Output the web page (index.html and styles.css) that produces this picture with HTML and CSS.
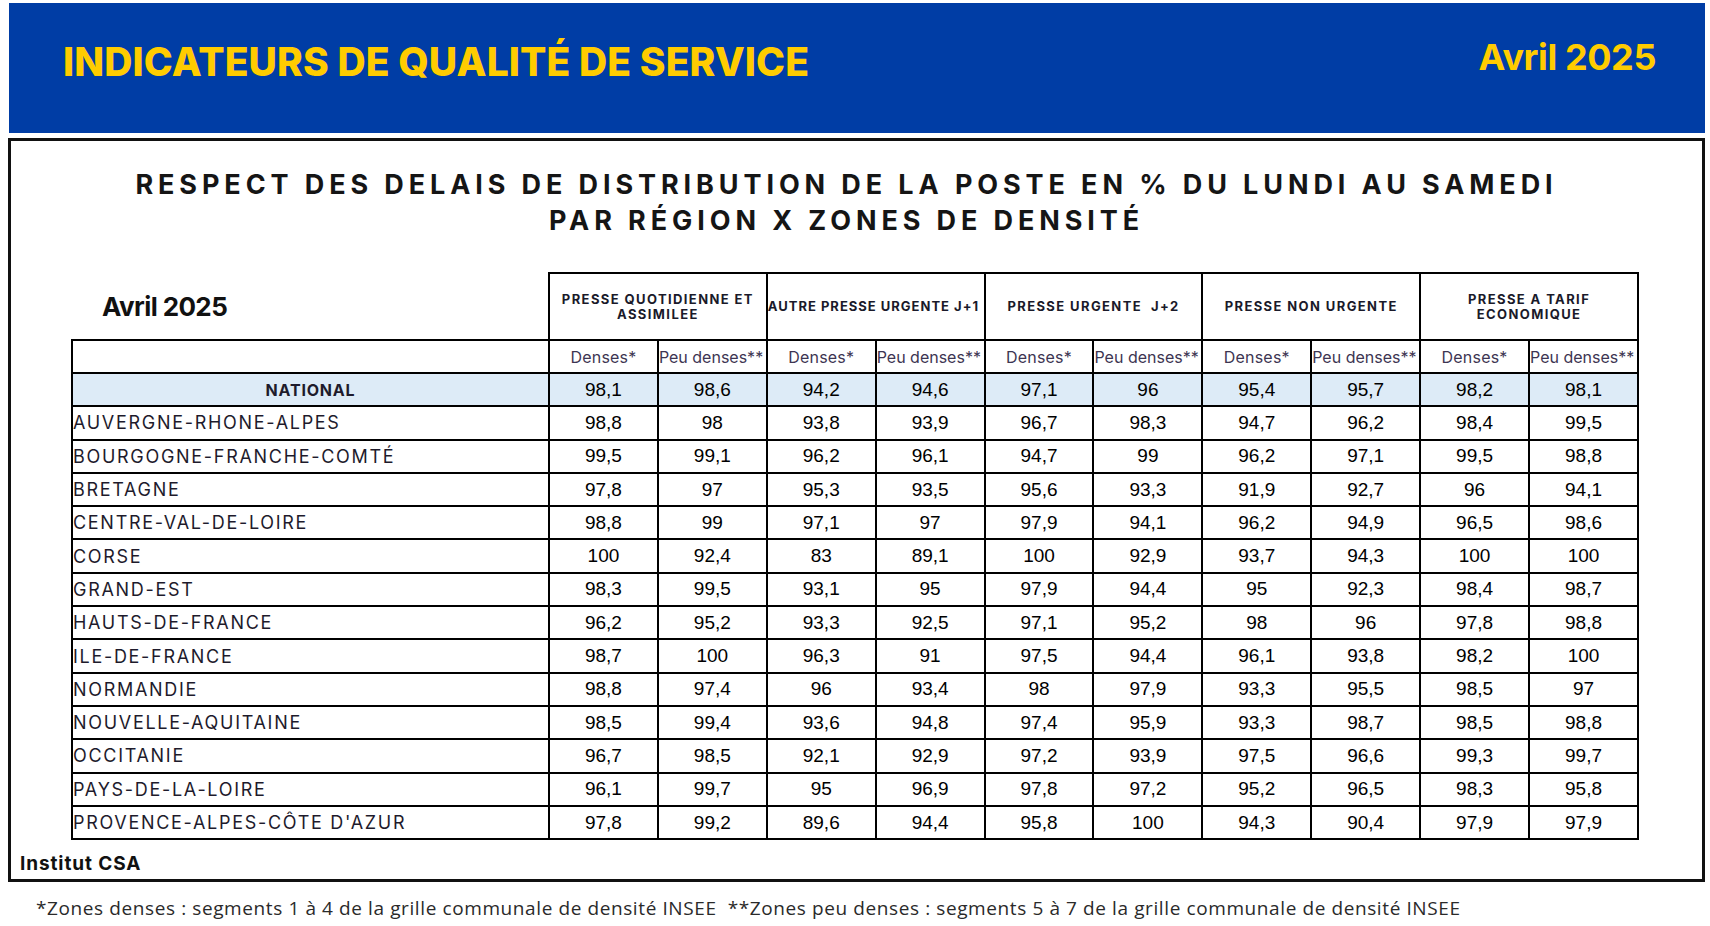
FILE: index.html
```html
<!DOCTYPE html>
<html lang="fr">
<head>
<meta charset="utf-8">
<title>Indicateurs de qualité de service</title>
<link rel="stylesheet" href="styles.css">
</head>
<body>
<header class="banner">
  <h1 class="banner-title">INDICATEURS DE QUALITÉ DE SERVICE</h1>
  <div class="banner-date">Avril 2025</div>
</header>
<section class="frame">
  <h2 class="subtitle">RESPECT DES DELAIS DE DISTRIBUTION DE LA POSTE EN % DU LUNDI AU SAMEDI<br>PAR RÉGION X ZONES DE DENSITÉ</h2>
  <table class="grid">
    <colgroup>
      <col class="c-region">
      <col><col><col><col><col><col><col><col><col><col>
    </colgroup>
    <thead>
      <tr class="r-group">
        <th class="corner">Avril 2025</th>
        <th colspan="2">PRESSE QUOTIDIENNE ET<br>ASSIMILEE</th>
        <th colspan="2" class="clip tight">AUTRE PRESSE URGENTE J+1</th>
        <th colspan="2">PRESSE URGENTE&nbsp; J+2</th>
        <th colspan="2">PRESSE NON URGENTE</th>
        <th colspan="2">PRESSE A TARIF<br>ECONOMIQUE</th>
      </tr>
      <tr class="r-sub">
        <th></th>
        <th>Denses*</th><th class="clip">Peu denses**</th>
        <th>Denses*</th><th class="clip">Peu denses**</th>
        <th>Denses*</th><th class="clip">Peu denses**</th>
        <th>Denses*</th><th class="clip">Peu denses**</th>
        <th>Denses*</th><th class="clip">Peu denses**</th>
      </tr>
    </thead>
    <tbody>
      <tr class="national"><th>NATIONAL</th><td>98,1</td><td>98,6</td><td>94,2</td><td>94,6</td><td>97,1</td><td>96</td><td>95,4</td><td>95,7</td><td>98,2</td><td>98,1</td></tr>
      <tr><th>AUVERGNE-RHONE-ALPES</th><td>98,8</td><td>98</td><td>93,8</td><td>93,9</td><td>96,7</td><td>98,3</td><td>94,7</td><td>96,2</td><td>98,4</td><td>99,5</td></tr>
      <tr><th>BOURGOGNE-FRANCHE-COMTÉ</th><td>99,5</td><td>99,1</td><td>96,2</td><td>96,1</td><td>94,7</td><td>99</td><td>96,2</td><td>97,1</td><td>99,5</td><td>98,8</td></tr>
      <tr><th>BRETAGNE</th><td>97,8</td><td>97</td><td>95,3</td><td>93,5</td><td>95,6</td><td>93,3</td><td>91,9</td><td>92,7</td><td>96</td><td>94,1</td></tr>
      <tr><th>CENTRE-VAL-DE-LOIRE</th><td>98,8</td><td>99</td><td>97,1</td><td>97</td><td>97,9</td><td>94,1</td><td>96,2</td><td>94,9</td><td>96,5</td><td>98,6</td></tr>
      <tr><th>CORSE</th><td>100</td><td>92,4</td><td>83</td><td>89,1</td><td>100</td><td>92,9</td><td>93,7</td><td>94,3</td><td>100</td><td>100</td></tr>
      <tr><th>GRAND-EST</th><td>98,3</td><td>99,5</td><td>93,1</td><td>95</td><td>97,9</td><td>94,4</td><td>95</td><td>92,3</td><td>98,4</td><td>98,7</td></tr>
      <tr><th>HAUTS-DE-FRANCE</th><td>96,2</td><td>95,2</td><td>93,3</td><td>92,5</td><td>97,1</td><td>95,2</td><td>98</td><td>96</td><td>97,8</td><td>98,8</td></tr>
      <tr><th>ILE-DE-FRANCE</th><td>98,7</td><td>100</td><td>96,3</td><td>91</td><td>97,5</td><td>94,4</td><td>96,1</td><td>93,8</td><td>98,2</td><td>100</td></tr>
      <tr><th>NORMANDIE</th><td>98,8</td><td>97,4</td><td>96</td><td>93,4</td><td>98</td><td>97,9</td><td>93,3</td><td>95,5</td><td>98,5</td><td>97</td></tr>
      <tr><th>NOUVELLE-AQUITAINE</th><td>98,5</td><td>99,4</td><td>93,6</td><td>94,8</td><td>97,4</td><td>95,9</td><td>93,3</td><td>98,7</td><td>98,5</td><td>98,8</td></tr>
      <tr><th>OCCITANIE</th><td>96,7</td><td>98,5</td><td>92,1</td><td>92,9</td><td>97,2</td><td>93,9</td><td>97,5</td><td>96,6</td><td>99,3</td><td>99,7</td></tr>
      <tr><th>PAYS-DE-LA-LOIRE</th><td>96,1</td><td>99,7</td><td>95</td><td>96,9</td><td>97,8</td><td>97,2</td><td>95,2</td><td>96,5</td><td>98,3</td><td>95,8</td></tr>
      <tr><th>PROVENCE-ALPES-CÔTE D'AZUR</th><td>97,8</td><td>99,2</td><td>89,6</td><td>94,4</td><td>95,8</td><td>100</td><td>94,3</td><td>90,4</td><td>97,9</td><td>97,9</td></tr>
    </tbody>
  </table>
  <div class="source">Institut CSA</div>
</section>
<p class="footnote">*Zones denses : segments 1 à 4 de la grille communale de densité INSEE&nbsp; **Zones peu denses : segments 5 à 7 de la grille communale de densité INSEE</p>
</body>
</html>
```
FILE: styles.css
```css
html, body {
  margin: 0;
  padding: 0;
  background: #ffffff;
}

body {
  font-family: "Inter", "Noto Sans", sans-serif;
  color: #111;
}

.banner {
  margin: 3px 5px 0 9px;
  height: 130px;
  background: #003da5;
  display: flex;
  justify-content: space-between;
  align-items: flex-start;
  padding: 0 49px 0 54px;
  box-sizing: border-box;
}

.banner-title {
  margin: 39px 0 0 0;
  font-family: "Inter", sans-serif;
  font-weight: 800;
  font-size: 39px;
  line-height: 40px;
  letter-spacing: 0.1px;
  color: #ffcc00;
}

.banner-date {
  margin-top: 34px;
  font-family: "Inter", sans-serif;
  font-weight: 700;
  font-size: 36px;
  line-height: 40px;
  letter-spacing: -0.4px;
  color: #ffcc00;
}

.frame {
  margin: 5px 5px 0 8px;
  height: 744px;
  border: 3px solid #111;
  box-sizing: border-box;
  padding: 26px 0 0 0;
}

.subtitle {
  margin: 0;
  padding-right: 20px;
  text-align: center;
  font-family: "Inter", sans-serif;
  font-weight: 700;
  font-size: 27px;
  line-height: 36px;
  letter-spacing: 4.9px;
  color: #151515;
}

.grid {
  margin: 33px 0 0 60px;
  width: 1568px;
  table-layout: fixed;
  border-collapse: collapse;
}

.c-region {
  width: 477px;
}

.grid th,
.grid td {
  border: 2px solid #000;
  padding: 0;
}

.r-group {
  height: 67px;
}

.r-group th {
  font-family: "Inter", sans-serif;
  font-weight: 700;
  font-size: 13px;
  line-height: 15px;
  letter-spacing: 1.4px;
  color: #1a1a2a;
  text-align: center;
}

.grid .r-group .corner {
  border-top: none;
  border-left: none;
  text-align: left;
  padding-left: 30px;
  font-size: 26px;
  font-weight: 700;
  letter-spacing: -0.6px;
  color: #111;
}

.clip {
  white-space: nowrap;
  overflow: hidden;
}

.r-group .clip {
  text-align: left;
}

.r-group .tight {
  letter-spacing: 1px;
}

.r-sub {
  height: 33px;
}

.r-sub th {
  font-family: "Inter", sans-serif;
  font-weight: 400;
  font-size: 16px;
  letter-spacing: 0.2px;
  color: #3d3552;
  text-align: center;
}

.r-sub .clip {
  text-align: left;
  letter-spacing: 0;
}

.grid tbody tr {
  height: 33.3px;
}

.grid tbody th {
  text-align: left;
  font-family: "Inter", sans-serif;
  font-weight: 400;
  font-size: 18px;
  letter-spacing: 1.7px;
  color: #1e1b2c;
  white-space: nowrap;
}

.grid tbody td {
  text-align: center;
  font-family: "Liberation Sans Narrow", "Liberation Sans", sans-serif;
  font-size: 19px;
  color: #000;
}

.grid tbody .national th,
.grid tbody .national td {
  background: #ddebf7;
}

.grid tbody .national th {
  text-align: center;
  font-weight: 700;
  font-size: 16px;
  letter-spacing: 0.8px;
}

.source {
  margin: 12px 0 0 9px;
  font-family: "Inter", sans-serif;
  font-weight: 700;
  font-size: 19px;
  letter-spacing: 0.9px;
  color: #111;
}

.footnote {
  margin: 13px 0 0 36px;
  font-family: "Open Sans", sans-serif;
  font-size: 19px;
  letter-spacing: 0.6px;
  color: #2a2a2a;
}
```
